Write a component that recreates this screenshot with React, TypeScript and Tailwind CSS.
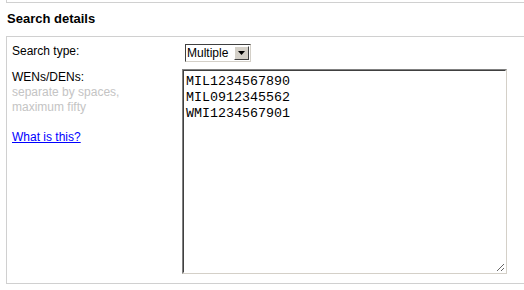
import React from 'react';

const ids = ['MIL1234567890', 'MIL0912345562', 'WMI1234567901'];

function FakeSelect({ value }: { value: string }) {
  return (
    <div className="flex h-[18px] w-[66px] items-stretch border border-t-[#404040] border-l-[#404040] border-r-[#d4d0c8] border-b-[#d4d0c8] bg-white">
      <div className="flex-1 pl-[1px] text-[12px] leading-[16px] text-black">{value}</div>
      <div className="m-[1px] flex w-[15px] items-center justify-center border border-t-white border-l-white border-r-[#404040] border-b-[#404040] bg-[#d4d0c8]">
        <svg width="7" height="4" viewBox="0 0 7 4">
          <path d="M0 0h7L3.5 4z" fill="#000" />
        </svg>
      </div>
    </div>
  );
}

export default function App() {
  return (
    <main className="w-[524px] h-[290px] overflow-hidden bg-white font-['Liberation_Sans',Arial,sans-serif] text-black">
      {/* tail of the box above */}
      <div className="ml-[6px] h-[3px] border-l border-b border-[#d0d0d0]" />

      <h2 className="pl-[7px] pt-[8px] mb-[10px] text-[13px] leading-[15px] font-bold">Search details</h2>

      <section className="ml-[6px] w-[540px] border border-[#d0d0d0] pl-[5px] pt-[7px] pb-[9px]">
        <div className="grid grid-cols-[170px_1fr] gap-y-[7px] text-[12px] leading-[15px]">
          <div>Search type:</div>
          <div className="pl-[3px]">
            <FakeSelect value="Multiple" />
          </div>

          <div className="pt-[1px]">
            <div>WENs/DENs:</div>
            <div className="text-[#c4c4c4]">separate by spaces,</div>
            <div className="text-[#c4c4c4]">maximum fifty</div>
            <a href="#" className="mt-[15px] block text-[#0000ff] underline">What is this?</a>
          </div>
          <div className="w-[325px] h-[205px] border border-t-[#808080] border-l-[#808080] border-r-[#d4d0c8] border-b-[#d4d0c8]">
            <textarea
              defaultValue={ids.join('\n')}
              spellCheck={false}
              className="block w-full h-full border border-t-[#404040] border-l-[#404040] border-r-white border-b-white px-[2px] pt-[3px] font-['Liberation_Mono','Courier_New',monospace] text-[13.33px] leading-[16px] text-black outline-none"
            />
          </div>
        </div>
      </section>
    </main>
  );
}
